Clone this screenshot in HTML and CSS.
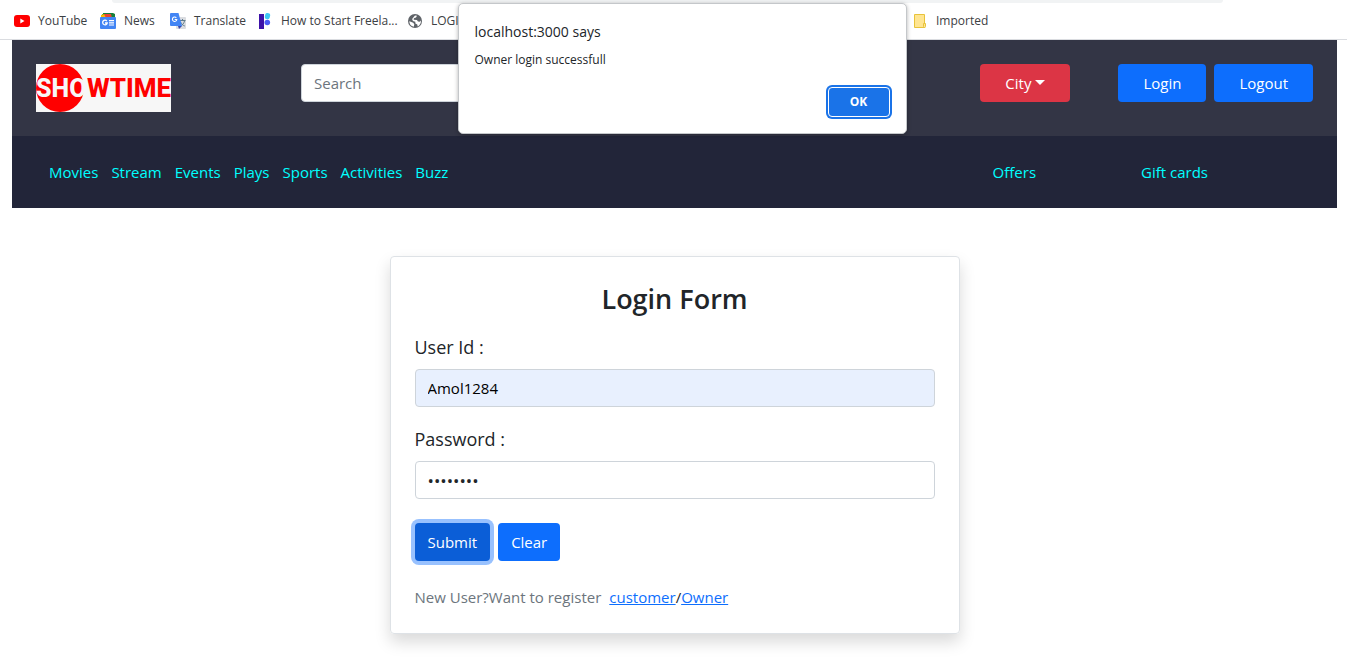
FILE: index.html
```html
<!DOCTYPE html>
<html lang="en">
<head>
<meta charset="utf-8">
<meta name="viewport" content="width=device-width, initial-scale=1">
<title>Showtime - Login</title>
<link rel="stylesheet" href="styles.css">
</head>
<body>
<div class="bookmarks-wrap">
  <div class="address-edge"></div>
  <nav class="bookmarks" aria-label="Bookmarks">
    <a class="bookmark bm-youtube" href="#"><svg width="16" height="16" viewBox="0 0 16 16" aria-hidden="true"><rect y="2" width="16" height="12" rx="3" fill="#f00"/><path d="M6.300 5.500v5l4.200-2.500z" fill="#fff"/></svg>YouTube</a>
    <a class="bookmark bm-news" href="#"><svg width="16" height="16" viewBox="0 0 16 16" aria-hidden="true"><path d="M2 1h7l3 4H2z" fill="#34a853"/><path d="M1 2l4-1 3 4H1z" fill="#fbbc04"/><path d="M4 1l8-1v4l-6 1z" fill="#ea4335"/><path d="M3 0h10l2 1v4h-3L11 1H3z" fill="#188038"/><rect y="4" width="16" height="12" rx="1" fill="#4285f4"/><path d="M6.800 8.100A2.300 2.300 0 1 0 7.200 10H5" fill="none" stroke="#fff" stroke-width="1.300"/><path d="M9 7.700h5M9 9.900h5M9 12h5" stroke="#fff" stroke-width="1.200"/></svg>News</a>
    <a class="bookmark bm-translate" href="#"><svg width="16" height="16" viewBox="0 0 16 16" aria-hidden="true"><rect x="6" y="4" width="10" height="12" rx="1" fill="#dadce0"/><path d="M9.500 7.500h6M12.500 6v1.500M14.500 8c-.7 2.700-2 4-4 5M10.500 9c1 2 2.300 3.300 4.300 4" fill="none" stroke="#607d8b" stroke-width="1"/><path d="M1 0h7.500L12 13H1a1 1 0 0 1-1-1V1a1 1 0 0 1 1-1z" fill="#4285f4"/><path d="M8 13h4l-3 3z" fill="#3949ab"/><path d="M6.300 4.800A2.200 2.200 0 1 0 6.800 6.500H4.700" fill="none" stroke="#fff" stroke-width="1.100"/></svg>Translate</a>
    <a class="bookmark bm-freelance" href="#"><svg width="16" height="16" viewBox="0 0 16 16" aria-hidden="true"><path d="M2 1h5v15H2z" fill="#3d11a8"/><rect x="8" y="0" width="5" height="6" rx="2" fill="#40c8f4" transform="rotate(12 10 3)"/><circle cx="10.300" cy="9.500" r="2.800" fill="#4b5cf5"/></svg>How to Start Freela...</a>
    <a class="bookmark bm-login" href="#"><svg width="16" height="16" viewBox="0 0 16 16" aria-hidden="true"><circle cx="8" cy="8" r="7" fill="#5f6368"/><path d="M2.500 8.300l3.700 1.400 1.100 1.600-.5 2.500A5.900 5.900 0 0 1 2.300 8.200zM8 2.400l2 .3-1 1.800-2.100.7-.2 1.600 3.200.2 1.100 1.600 1.700.2 1.200-1.200c.3 2.700-1.100 4.900-3.200 5.800l-.4-1.800-1.900-1-.1-1.900-2.400-.8-.8-1.900z" fill="#fff"/></svg>LOGIN</a>
    <a class="bookmark bm-imported" href="#"><svg width="16" height="16" viewBox="0 0 16 16" aria-hidden="true"><path d="M2.500 1.500h10v13h-10z" fill="#ffe591" stroke="#e8c33a"/><path d="M11.500 10.500h2v3a1 1 0 0 1-2 0z" fill="#ffe591" stroke="#e8c33a"/></svg>Imported</a>
  </nav>
</div>

<div class="page">
  <header class="topbar">
    <a class="logo" href="#">
      <svg width="135" height="48" viewBox="0 0 135 48" role="img" aria-label="Showtime">
        <rect width="135" height="48" fill="#f7f7f7"/>
        <circle cx="24" cy="24" r="24" fill="#f00"/>
        <text class="logo-sho" x="0" y="33">SHO</text>
        <text class="logo-wtime" x="51" y="33">WTIME</text>
      </svg>
    </a>
    <input class="field search" type="search" placeholder="Search" aria-label="Search">
    <div class="actions">
      <button class="btn btn-wide btn-danger" type="button">City<span class="caret"></span></button>
      <div class="session">
        <button class="btn btn-wide" type="button">Login</button>
        <button class="btn btn-wide" type="button">Logout</button>
      </div>
    </div>
  </header>
  <nav class="menu" aria-label="Main">
    <div class="menu-main">
      <a href="#">Movies</a><a href="#">Stream</a><a href="#">Events</a><a href="#">Plays</a><a href="#">Sports</a><a href="#">Activities</a><a href="#">Buzz</a>
    </div>
    <div class="menu-side"><a href="#">Offers</a><a href="#">Gift cards</a></div>
  </nav>

  <main>
    <form class="card">
      <h1>Login Form</h1>
      <div class="group">
        <label for="user">User Id :</label>
        <input class="field autofilled" id="user" type="text" value="Amol1284">
      </div>
      <div class="group">
        <label for="password">Password :</label>
        <input class="field secret" id="password" type="password" value="abcd1234">
      </div>
      <div class="buttons">
        <button class="btn btn-focus" type="button">Submit</button>
        <button class="btn" type="reset">Clear</button>
      </div>
      <p class="register"><span class="muted">New User?Want to register</span><span><a href="#">customer</a>/<a href="#">Owner</a></span></p>
    </form>
  </main>
</div>

<div class="dialog" role="alertdialog" aria-labelledby="dialog-title" aria-describedby="dialog-text">
  <h2 id="dialog-title">localhost:3000 says</h2>
  <p id="dialog-text">Owner login successfull</p>
  <button class="ok" type="button">OK</button>
</div>
</body>
</html>
```
FILE: styles.css
```css
* { box-sizing: border-box; }
body {
  margin: 0;
  background: #fff;
  color: #212529;
  font-family: "Open Sans", "Noto Sans", sans-serif;
  font-size: 15px;
  line-height: 24px;
}
button, input { font: inherit; }

.bookmarks-wrap { border-bottom: 1px solid #dadce0; }
.address-edge {
  height: 3px;
  margin: 0 124px 0 112px;
  background: #f1f3f4;
  border-radius: 0 0 8px 8px;
}
.bookmarks {
  display: flex;
  height: 36px;
  padding-left: 14px;
  font-size: 12px;
}
.bookmark {
  display: flex;
  flex: none;
  align-items: center;
  gap: 8px;
  color: #3c4043;
  text-decoration: none;
  white-space: nowrap;
}
.bm-youtube { width: 86px; }
.bm-news { width: 70px; }
.bm-translate { width: 87px; }
.bm-freelance { width: 150px; }
.bm-login { width: 505px; }

.page { padding: 0 10px 0 12px; }
.topbar {
  display: flex;
  align-items: flex-start;
  padding: 24px;
  background: #333545;
}
.logo { display: flex; flex: none; margin-right: 130px; }
.logo text { font-family: Roboto, "Liberation Sans", sans-serif; font-weight: 800; }
.logo-sho { fill: #f7f7f7; font-size: 25px; }
.logo-wtime { fill: #f00; font-size: 26px; }
.field {
  width: 100%;
  height: 38px;
  padding: 6px 12px;
  border: 1px solid #ced4da;
  border-radius: 4px;
  background: #fff;
  color: #212529;
}
.field::placeholder { color: #6c757d; opacity: 1; }
.search { flex: 0 1 500px; min-width: 0; }
.actions { display: flex; gap: 48px; margin-left: auto; }
.session { display: flex; gap: 8px; }
.btn {
  height: 38px;
  padding: 0 13px;
  border: 0;
  border-radius: 4px;
  background: #0d6efd;
  color: #fff;
}
.btn-wide { padding: 0 25px; }
.btn-danger { display: flex; align-items: center; gap: 4px; background: #dc3545; }
.caret { margin-bottom: 2px; border: 5px solid transparent; border-top-color: #fff; border-bottom: 0; }
.btn-focus { background: #0b5ed7; box-shadow: 0 0 0 4px #98c1fe; }

.menu {
  display: flex;
  justify-content: space-between;
  padding: 24px 129px 24px 37px;
  background: #222539;
}
.menu a { color: #0ff; text-decoration: none; }
.menu-main { display: flex; gap: 13px; }
.menu-side { display: flex; gap: 105px; }

.card {
  max-width: 570px;
  margin: 48px auto 24px;
  padding: 24px;
  border: 1px solid #dee2e6;
  border-radius: 4px;
  box-shadow: 0 8px 16px rgba(0, 0, 0, 0.15);
}
h1 {
  margin: 0 0 16px;
  font-size: 27px;
  font-weight: 600;
  line-height: 36px;
  text-align: center;
}
.group { margin-bottom: 18px; }
.group label {
  display: block;
  margin-bottom: 8px;
  font-size: 18px;
  line-height: 28px;
}
.autofilled { background: #e8f0fe; color: #000; }
.secret { font-size: 17px; }
.buttons { display: flex; gap: 8px; margin: 24px 0; }
.register { display: flex; gap: 8px; margin: 0; }
.register a { color: #0d6efd; }
.muted { color: #6c757d; }

.dialog {
  position: absolute;
  top: 3px;
  left: 50%;
  display: flex;
  flex-direction: column;
  width: 449px;
  padding: 16px;
  transform: translateX(-216px);
  border: 1px solid #c4c7ca;
  border-radius: 5px;
  background: #fff;
  box-shadow: 0 1px 4px rgba(0, 0, 0, 0.3);
}
.dialog h2 { margin: 0 0 6px; font-size: 14px; font-weight: 400; line-height: 24px; }
.dialog p { margin: 0 0 17px; font-size: 12px; line-height: 20px; }
.ok {
  align-self: flex-end;
  width: 62px;
  height: 30px;
  border: 1px solid #fff;
  border-radius: 4px;
  background: #1a73e8;
  box-shadow: 0 0 0 2px #1a73e8;
  color: #fff;
  font-size: 12px;
  font-weight: 700;
}
```
